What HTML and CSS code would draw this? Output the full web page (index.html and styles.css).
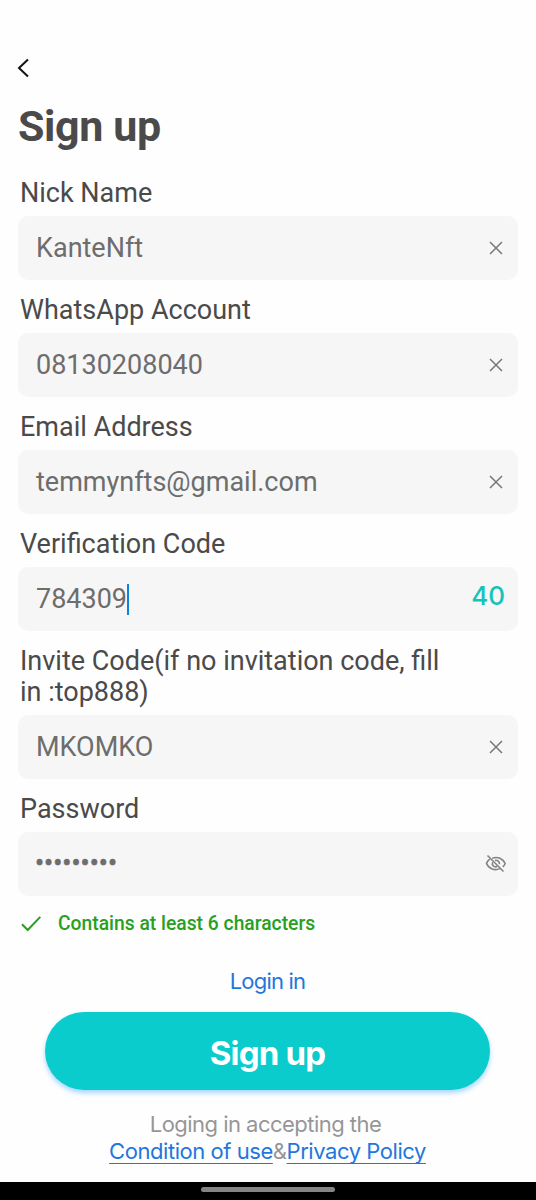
FILE: index.html
```html
<!DOCTYPE html>
<html lang="en">
<head>
    <meta charset="UTF-8">
    <meta name="viewport" content="width=device-width, initial-scale=1.0">
    <title>Sign up</title>
    <link rel="stylesheet" href="styles.css">
</head>
<body>
    <header class="header">
        <svg class="back" width="14" height="20" viewBox="0 0 14 20">
            <path d="M11 1.5L2 10L11 18.5"/>
        </svg>
        <h1>Sign up</h1>
    </header>
    <main class="form">
        <div class="field">
            <div class="label">Nick Name</div>
            <div class="input">
                <span class="value">KanteNft</span>
                <svg class="clear" width="14" height="14" viewBox="0 0 14 14"><path d="M1 1L13 13M13 1L1 13"/></svg>
            </div>
        </div>
        <div class="field">
            <div class="label">WhatsApp Account</div>
            <div class="input">
                <span class="value">08130208040</span>
                <svg class="clear" width="14" height="14" viewBox="0 0 14 14"><path d="M1 1L13 13M13 1L1 13"/></svg>
            </div>
        </div>
        <div class="field">
            <div class="label">Email Address</div>
            <div class="input">
                <span class="value">temmynfts@gmail.com</span>
                <svg class="clear" width="14" height="14" viewBox="0 0 14 14"><path d="M1 1L13 13M13 1L1 13"/></svg>
            </div>
        </div>
        <div class="field">
            <div class="label">Verification Code</div>
            <div class="input">
                <span class="value">784309</span>
                <span class="caret"></span>
                <span class="timer">40</span>
            </div>
        </div>
        <div class="field">
            <div class="label">Invite Code(if no invitation code, fill<br>in :top888)</div>
            <div class="input">
                <span class="value">MKOMKO</span>
                <svg class="clear" width="14" height="14" viewBox="0 0 14 14"><path d="M1 1L13 13M13 1L1 13"/></svg>
            </div>
        </div>
        <div class="field">
            <div class="label">Password</div>
            <div class="input">
                <span class="value password">•••••••••</span>
                <svg class="eye" width="22" height="20" viewBox="0 0 22 20">
                    <path d="M7.3 4.2C12.8 2.2 17.8 4.8 20.2 9.5C19.6 10.8 18.8 11.9 17.8 12.8"/>
                    <path d="M4.8 5.2C3.4 6.3 2.2 7.7 1.5 9.5C4 15 9.8 17 14.9 14.6"/>
                    <path d="M10 6.4C12.6 5.8 14.8 7.6 14.4 10.2M7.6 8.3C6.5 11.4 9.2 13.7 12.2 12.6"/>
                    <path d="M2.5 1.5L18.5 17.5"/>
                </svg>
            </div>
        </div>
        <div class="hint">
            <svg width="22" height="18" viewBox="0 0 22 18"><path d="M2 9.2L7.7 15L20.3 1.9"/></svg>
            <span>Contains at least 6 characters</span>
        </div>
    </main>
    <footer class="footer">
        <a class="login">Login in</a>
        <button class="submit">Sign up</button>
        <div class="terms">
            <div class="accept">Loging in accepting the</div>
            <div class="links"><a>Condition of use</a>&amp;<a>Privacy Policy</a></div>
        </div>
    </footer>
    <div class="navbar">
        <div class="handle"></div>
    </div>
</body>
</html>
```
FILE: styles.css
```css
* {
    box-sizing: border-box;
}

body {
    display: flex;
    flex-direction: column;
    height: 1200px;
    margin: 0;
    background-color: #fefefe;
    font-family: Roboto, Arial, sans-serif;
    color: #4a4a4a;
}

svg {
    display: block;
    flex-shrink: 0;
    fill: none;
}

.header {
    padding: 58px 18px 0;
}

.back {
    margin-left: -1px;
    stroke: #111;
    stroke-width: 2;
}

h1 {
    margin: 22px 0 0;
    font-size: 43px;
    line-height: 52px;
    font-weight: 700;
    letter-spacing: -0.4px;
}

.form {
    padding: 26px 18px 0;
}

.field {
    margin-bottom: 15px;
}

.label {
    padding-left: 2px;
    margin-bottom: 7px;
    font-size: 27px;
    line-height: 31px;
}

.input {
    display: flex;
    align-items: center;
    height: 64px;
    padding: 0 15px 0 18px;
    border-radius: 10px;
    background-color: #f6f6f6;
    font-size: 27px;
    color: #6d6d6d;
}

.clear {
    margin-left: auto;
    stroke: #777;
    stroke-width: 1.5;
}

.caret {
    width: 2px;
    height: 31px;
    background-color: #0a84d8;
}

.timer {
    margin: -7px -2px 0 auto;
    font-family: Inter, sans-serif;
    font-size: 26px;
    font-weight: 500;
    color: #12c4bc;
}

.password {
    margin: -2px 0 0 -1px;
    -webkit-text-stroke: 0.6px #6d6d6d;
}

.eye {
    margin: 0 -4px 0 auto;
    stroke: #828282;
    stroke-width: 1.6;
}

.hint {
    display: flex;
    align-items: center;
    gap: 16px;
    margin-top: -1px;
    padding-left: 2px;
    font-size: 19.3px;
    line-height: 27px;
    font-weight: 500;
    color: #28a01e;
}

.hint svg {
    stroke: #28a01e;
    stroke-width: 2;
}

.footer {
    display: flex;
    flex-direction: column;
    align-items: center;
    padding: 30px 1px 0 0;
    font-family: Inter, sans-serif;
}

.login {
    font-size: 22px;
    line-height: 28px;
    letter-spacing: -0.8px;
    color: #2277dd;
}

.submit {
    width: 445px;
    height: 78px;
    margin-top: 17px;
    padding: 3px 0 0;
    border: none;
    border-radius: 39px;
    background-color: #0bcccc;
    box-shadow: 0 3px 5px rgba(80, 175, 255, 0.5);
    font-family: Inter, sans-serif;
    font-size: 33px;
    font-weight: 700;
    letter-spacing: -0.8px;
    color: #fff;
}

.terms {
    margin-top: 21px;
    font-size: 22px;
    line-height: 27px;
    letter-spacing: -0.45px;
    text-align: center;
    color: #969696;
}

.accept {
    padding-right: 4px;
    letter-spacing: -0.53px;
}

.terms a {
    color: #2277dd;
    text-decoration: underline;
    text-decoration-thickness: 1px;
    text-underline-offset: 4px;
    text-decoration-skip-ink: none;
}

.navbar {
    display: flex;
    justify-content: center;
    height: 18px;
    margin-top: auto;
    padding-top: 5px;
    background-color: #000;
}

.handle {
    width: 134px;
    height: 5px;
    border-radius: 3px;
    background-color: #858585;
}
```
